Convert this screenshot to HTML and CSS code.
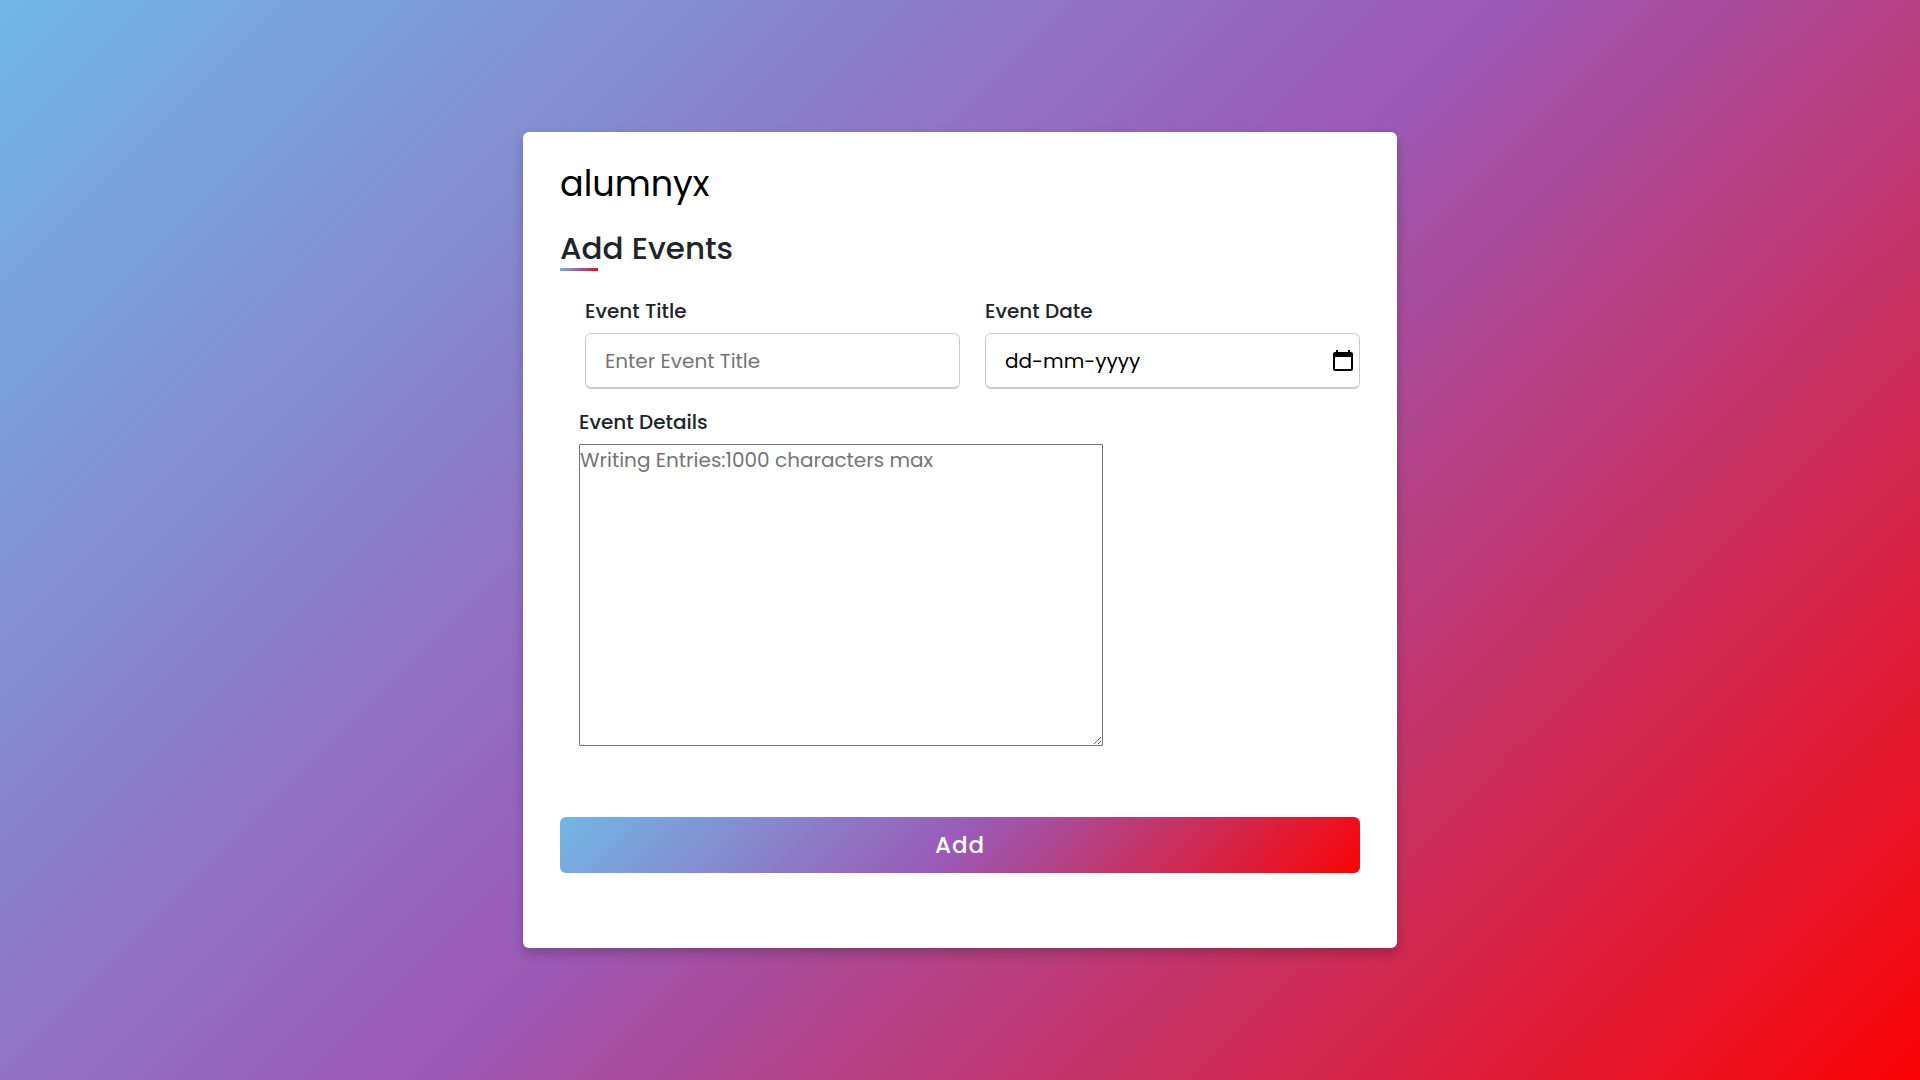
FILE: index.html
```html
<!DOCTYPE html>
<html lang="en">
<head>
  <meta charset="UTF-8">
  <meta name="viewport" content="width=device-width, initial-scale=1">
  <title>alumnyx - Add Events</title>
  <link rel="stylesheet" href="styles.css">
</head>
<body>
  <main class="card">
    <a class="brand" href="#">alumnyx</a>
    <h1 class="title">Add Events</h1>
    <form class="form">
      <div class="row">
        <div class="group">
          <label class="label" for="event-title">Event Title</label>
          <div class="field">
            <input class="input" id="event-title" type="text" placeholder="Enter Event Title">
          </div>
        </div>
        <div class="group">
          <label class="label" for="event-date">Event Date</label>
          <div class="field">
            <input class="input input-date" id="event-date" type="text" inputmode="numeric" placeholder="dd-mm-yyyy">
            <button class="picker" type="button" aria-label="Choose date">
              <svg width="20" height="22" viewBox="0 0 20 22" aria-hidden="true">
                <path d="M3 0h2v2h10V0h2v2h1a2 2 0 0 1 2 2v15a2 2 0 0 1-2 2H2a2 2 0 0 1-2-2V4a2 2 0 0 1 2-2h1zM2 7v12h16V7z" fill="#000" fill-rule="evenodd"/>
              </svg>
            </button>
          </div>
        </div>
      </div>
      <div class="details">
        <label class="label" for="event-details">Event Details</label>
        <textarea class="textarea" id="event-details" maxlength="1000" placeholder="Writing Entries:1000 characters max"></textarea>
      </div>
      <button class="submit" type="submit">Add</button>
    </form>
  </main>
</body>
</html>
```

FILE: styles.css
```css
*,
*::before,
*::after {
  box-sizing: border-box;
}

body {
  margin: 0;
  min-height: 100vh;
  display: flex;
  align-items: center;
  justify-content: center;
  background: linear-gradient(135deg, #71b7e6, #9b59b6, #f90404);
  color: #212529;
  font-family: Poppins, Inter, "Open Sans", sans-serif;
  font-size: 20px;
  line-height: 30px;
}

.card {
  width: 100%;
  max-width: 874px;
  padding: 24px 37px 75px;
  background: #fff;
  border-radius: 6px;
  box-shadow: 0 6px 12px rgba(0, 0, 0, 0.2);
}

.brand {
  display: block;
  color: #000;
  font-size: 35px;
  font-weight: 400;
  line-height: 56px;
  text-decoration: none;
}

.title {
  margin: 17px 0 25px;
  font-size: 31px;
  font-weight: 500;
  line-height: 39px;
}

.title::after {
  content: "";
  display: block;
  width: 38px;
  height: 3px;
  background: linear-gradient(135deg, #71b7e6, #9b59b6, #f90404);
}

.row {
  display: flex;
  gap: 25px;
  margin-left: 25px;
}

.group {
  flex: 1;
  min-width: 0;
}

.label {
  display: block;
  margin-bottom: 7px;
  font-weight: 500;
}

.field {
  display: flex;
  align-items: center;
  height: 56px;
  border: 1px solid #ccc;
  border-bottom-width: 2px;
  border-radius: 6px;
}

.input {
  flex: 1;
  min-width: 0;
  height: 100%;
  padding: 0 19px;
  border: 0;
  background: transparent;
  color: #000;
  font: inherit;
  outline: none;
}

.input::placeholder,
.textarea::placeholder {
  color: #757575;
}

.input-date::placeholder {
  color: #000;
}

.picker {
  display: flex;
  padding: 0 6px;
  border: 0;
  background: none;
  cursor: pointer;
}

.details {
  margin: 18px 0 71px 19px;
}

.textarea {
  display: block;
  width: 524px;
  max-width: 100%;
  height: 302px;
  padding: 0;
  border: 1px solid #767676;
  border-radius: 1px;
  color: #000;
  font: inherit;
}

.submit {
  display: block;
  width: 100%;
  height: 56px;
  padding: 0;
  border: 0;
  border-radius: 6px;
  background: linear-gradient(135deg, #71b7e6, #9b59b6, #f90404);
  color: #fff;
  font: inherit;
  font-size: 23px;
  font-weight: 500;
  letter-spacing: 1px;
  cursor: pointer;
}
```
